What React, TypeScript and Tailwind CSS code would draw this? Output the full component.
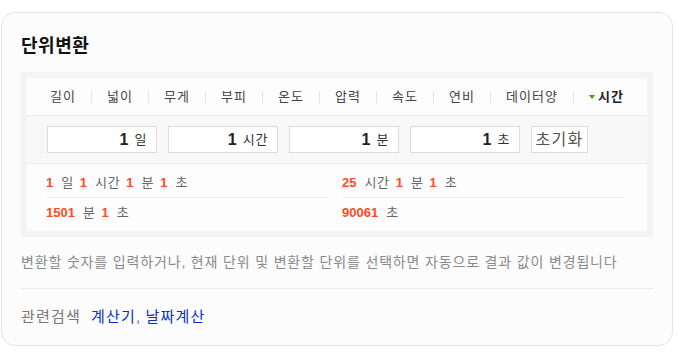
import React from "react";

const tabs = ["길이", "넓이", "무게", "부피", "온도", "압력", "속도", "연비", "데이터양"];

function Num({ n }: { n: string }) {
  return <span className="font-bold text-[#ff4b23] mr-[8px]">{n}</span>;
}
function Unit({ u }: { u: string }) {
  return <span className="text-[#666] mr-[6px] tracking-[0.05em]">{u}</span>;
}

function InputBox({ unit }: { unit: string }) {
  return (
    <div className="w-[110px] h-[27px] border border-[#dcdcdc] bg-white flex items-center justify-end pr-[9px]">
      <span className="text-[16px] font-bold text-[#222] mr-[6px]">1</span>
      <span className="text-[13px] text-[#333] tracking-[0.05em]">{unit}</span>
    </div>
  );
}

export default function App() {
  return (
    <div
      className="w-[695px] h-[359px] bg-white pt-[12px] pl-[1px]"
      style={{ fontFamily: '"Liberation Sans", "Noto Sans CJK KR", sans-serif' }}
    >
      <div className="w-[672px] h-[334px] border border-[#e4e4e4] rounded-[14px] bg-[#fcfcfc] px-[19px] pt-[20px]">
        <div className="h-[26px] leading-[26px] text-[18px] font-bold text-[#111] mb-[13px] tracking-[0.03em]">단위변환</div>

        <div className="bg-[#f4f4f4] p-[6px]">
          <div className="bg-[#fdfdfd]">
            <div className="h-[38px] border-b border-[#ebebeb] flex items-center justify-center text-[13px] text-[#444] tracking-[0.08em]">
              {tabs.map((t) => (
                <React.Fragment key={t}>
                  <span className="px-[15px]">{t}</span>
                  <span className="w-px h-[12px] bg-[#e3e3e3]" />
                </React.Fragment>
              ))}
              <span className="px-[15px] flex items-center font-bold text-[#222]">
                <svg width="6" height="4" viewBox="0 0 6 4" className="mr-[3px]">
                  <path d="M0 0 L6 0 L3 4 Z" fill="#3ea30a" />
                </svg>
                시간
              </span>
            </div>

            <div className="h-[48px] bg-[#f8f8f8] border-b border-[#ebebeb] flex items-center pl-[20px] gap-[11px]">
              <InputBox unit="일" />
              <InputBox unit="시간" />
              <InputBox unit="분" />
              <InputBox unit="초" />
              <div className="w-[57px] h-[27px] border border-[#dcdcdc] bg-white flex items-center justify-center text-[16px] text-[#555] tracking-[0.08em]">
                초기화
              </div>
            </div>

            <div className="grid grid-cols-2 gap-x-[11px] pl-[19px] pr-[20px] pt-[5px] pb-[4px] text-[13px]">
              <div>
                <div className="h-[29px] flex items-center border-b border-[#efefef]">
                  <Num n="1" /><Unit u="일" />
                  <Num n="1" /><Unit u="시간" />
                  <Num n="1" /><Unit u="분" />
                  <Num n="1" /><Unit u="초" />
                </div>
                <div className="h-[29px] flex items-center">
                  <Num n="1501" /><Unit u="분" />
                  <Num n="1" /><Unit u="초" />
                </div>
              </div>
              <div>
                <div className="h-[29px] flex items-center border-b border-[#efefef]">
                  <Num n="25" /><Unit u="시간" />
                  <Num n="1" /><Unit u="분" />
                  <Num n="1" /><Unit u="초" />
                </div>
                <div className="h-[29px] flex items-center">
                  <Num n="90061" /><Unit u="초" />
                </div>
              </div>
            </div>
          </div>
        </div>

        <div className="mt-[15px] h-[20px] leading-[20px] text-[14px] text-[#8a8a8a] tracking-[0.06em] whitespace-nowrap">
          변환할 숫자를 입력하거나, 현재 단위 및 변환할 단위를 선택하면 자동으로 결과 값이 변경됩니다
        </div>
        <div className="mt-[16px] border-t border-[#ebebeb]" />
        <div className="mt-[18px] h-[20px] leading-[20px] text-[15px] flex tracking-[0.08em] whitespace-nowrap">
          <span className="text-[#777] mr-[10px]">관련검색</span>
          <span className="text-[#0b2fc7]">계산기</span>
          <span className="text-[#666] mr-[4px]">,</span>
          <span className="text-[#0b2fc7]">날짜계산</span>
        </div>
      </div>
    </div>
  );
}
